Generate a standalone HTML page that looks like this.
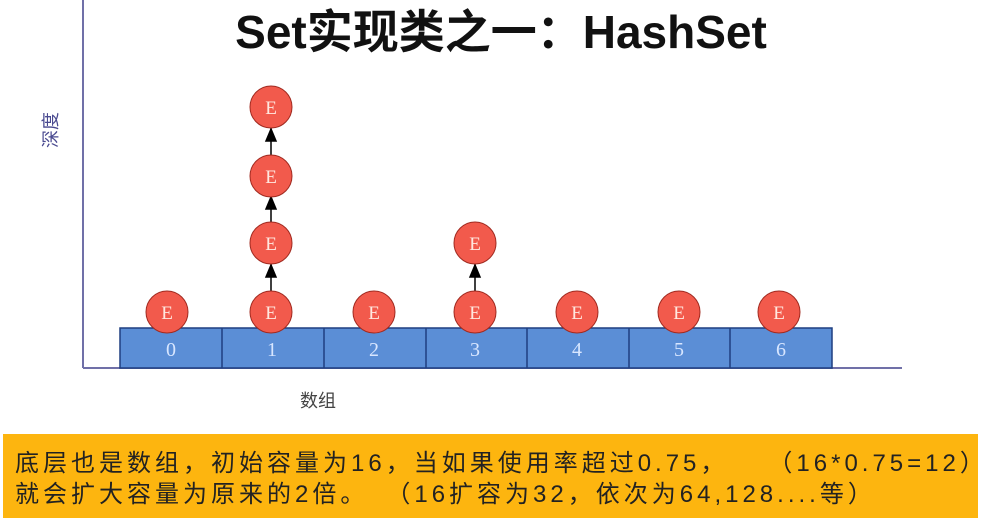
<!DOCTYPE html>
<html><head><meta charset="utf-8"><style>
body{margin:0;width:981px;height:520px;background:#fff;position:relative;overflow:hidden;font-family:"Liberation Sans","Noto Sans CJK SC",sans-serif}
.t{position:absolute;left:0;width:1002px;text-align:center;top:-4px;font-size:46px;font-weight:bold;color:#111}
.box{position:absolute;left:3px;top:434px;width:975px;height:84px;background:#fdb50f}
.box div{position:absolute;left:12px;font-size:24px;letter-spacing:4px;color:#222;white-space:nowrap}
.g{display:inline-block}
</style></head><body>
<div class="t">Set实现类之一：HashSet</div>
<svg width="981" height="520" style="position:absolute;left:0;top:0">
<line x1="83" y1="0" x2="83" y2="368" stroke="#7070a8" stroke-width="2"/>
<line x1="83" y1="368" x2="902" y2="368" stroke="#7070a8" stroke-width="2"/>
<g stroke="#1f3f80" stroke-width="1.5" fill="#5b8ed6">
<rect x="120" y="328" width="712" height="40"/>
<line x1="222" y1="328" x2="222" y2="368"/><line x1="324" y1="328" x2="324" y2="368"/>
<line x1="426" y1="328" x2="426" y2="368"/><line x1="527" y1="328" x2="527" y2="368"/>
<line x1="629" y1="328" x2="629" y2="368"/><line x1="730" y1="328" x2="730" y2="368"/>
</g>
<g font-family="Liberation Serif,serif" font-size="20" fill="#d8e6ff" text-anchor="middle">
<text x="171" y="356">0</text><text x="272" y="356">1</text><text x="374" y="356">2</text><text x="475" y="356">3</text><text x="577" y="356">4</text><text x="679" y="356">5</text><text x="781" y="356">6</text>
</g>
<g stroke="#000" stroke-width="1.5" fill="#000">
<line x1="271" y1="128" x2="271" y2="155"/><polygon points="271,129 266,141 276,141"/>
<line x1="271" y1="197" x2="271" y2="222"/><polygon points="271,197 266,209 276,209"/>
<line x1="271" y1="264" x2="271" y2="291"/><polygon points="271,265 266,277 276,277"/>
<line x1="475" y1="264" x2="475" y2="291"/><polygon points="475,265 470,277 480,277"/>
</g>
<g fill="#f25a4c" stroke="#a02a20" stroke-width="1">
<circle cx="167" cy="312" r="21"/><circle cx="271" cy="312" r="21"/><circle cx="374" cy="312" r="21"/><circle cx="475" cy="312" r="21"/><circle cx="577" cy="312" r="21"/><circle cx="679" cy="312" r="21"/><circle cx="779" cy="312" r="21"/>
<circle cx="271" cy="107" r="21"/><circle cx="271" cy="176" r="21"/><circle cx="271" cy="243" r="21"/><circle cx="475" cy="243" r="21"/>
</g>
<g font-family="Liberation Serif,serif" font-size="19" fill="#ffe8e0" text-anchor="middle">
<text x="167" y="319">E</text><text x="271" y="319">E</text><text x="374" y="319">E</text><text x="475" y="319">E</text><text x="577" y="319">E</text><text x="679" y="319">E</text><text x="779" y="319">E</text>
<text x="271" y="114">E</text><text x="271" y="183">E</text><text x="271" y="250">E</text><text x="475" y="250">E</text>
</g>
<text x="0" y="0" transform="translate(57,130) rotate(-90)" text-anchor="middle" font-family="Noto Sans CJK SC,sans-serif" font-size="18" fill="#4a4a90">深度</text>
<text x="318" y="407" text-anchor="middle" font-family="Noto Sans CJK SC,sans-serif" font-size="18" fill="#444">数组</text>
</svg>
<div class="box">
<div style="top:9px">底层也是数组，初始容量为16，当如果使用率超过0.75，<span class="g" style="width:40px"></span>（16*0.75=12）</div>
<div style="top:40px">就会扩大容量为原来的2倍。<span class="g" style="width:18px"></span>（16扩容为32，依次为64,128....等）</div>
</div>
</body></html>
